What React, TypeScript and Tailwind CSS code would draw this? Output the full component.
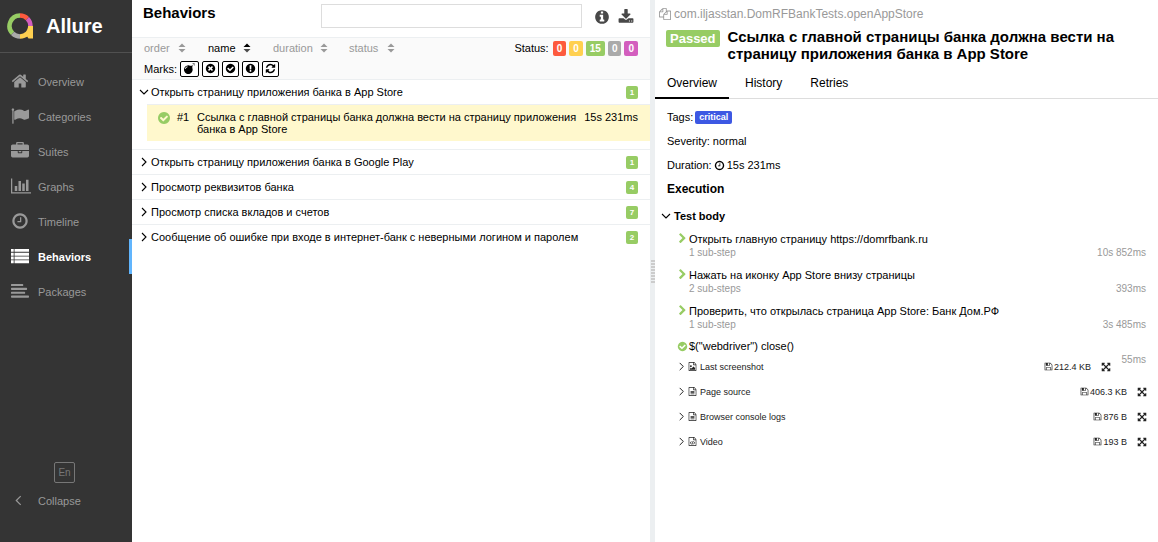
import React from 'react';

const DISC =
  'm0 0q0 209-103 385.5t-279.5 279.5-385.5 103-385.5-103-279.5-279.5-103-385.5 103-385.5 279.5-279.5 385.5-103 385.5 103 279.5 279.5 103 385.5z';
const FILE =
  'M1596 380q28 28 48 76t20 88v1152q0 40-28 68t-68 28h-1344q-40 0-68-28t-28-68v-1600q0-40 28-68t68-28h896q40 0 88 20t76 48zm-444-244v376h376q-10-29-22-41l-313-313q-12-12-41-22zm384 1528v-1024h-416q-40 0-68-28t-28-68v-416h-768v1536h1280z';

const ICONS = {
  home: 'M1472 992v480q0 26-19 45t-45 19h-384v-384h-256v384h-384q-26 0-45-19t-19-45v-480q0-1 .5-3t.5-3l575-474 575 474q1 2 1 6zm223-69l-62 74q-8 9-21 11h-3q-13 0-21-7l-692-577-692 577q-12 8-24 7-13-2-21-11l-62-74q-8-10-7-23.5t11-21.5l719-599q32-26 76-26t76 26l244 204v-195q0-14 9-23t23-9h192q14 0 23 9t9 23v408l219 182q10 8 11 21.5t-7 23.5z',
  flag: 'M320 256q0 72-64 110v1266q0 13-9.5 22.5t-22.5 9.5h-64q-13 0-22.5-9.5t-9.5-22.5v-1266q-64-38-64-110 0-53 37.5-90.5t90.5-37.5 90.5 37.5 37.5 90.5zm1472 64v763q0 25-12.5 38.5t-39.5 27.5q-215 116-369 116-61 0-123.5-22t-108.5-48-115.5-48-142.5-22q-192 0-464 146-17 9-33 9-26 0-45-19t-19-45v-742q0-32 31-55 21-14 79-43 236-120 421-120 107 0 200 29t219 88q38 19 88 19 54 0 117.5-21t110-47 88-47 54.5-21q26 0 45 19t19 45z',
  briefcase:
    'M640 256h512v-128h-512v128zm1152 640v480q0 66-47 113t-113 47h-1472q-66 0-113-47t-47-113v-480h672v160q0 26 19 45t45 19h320q26 0 45-19t19-45v-160h672zm-768 0v128h-256v-128h256zm768-480v384h-1792v-384q0-66 47-113t113-47h352v-160q0-40 28-68t68-28h576q40 0 68 28t28 68v160h352q66 0 113 47t47 113z',
  chart:
    'M640 896v512h-256v-512h256zm384-512v1024h-256v-1024h256zm1024 1152v128h-2048v-1536h128v1408h1920zm-640-896v768h-256v-768h256zm384-384v1152h-256v-1152h256z',
  clock:
    'M1024 544v448q0 14-9 23t-23 9h-320q-14 0-23-9t-9-23v-64q0-14 9-23t23-9h224v-352q0-14 9-23t23-9h64q14 0 23 9t9 23zm416 352q0-148-73-273t-198-198-273-73-273 73-198 198-73 273 73 273 198 198 273 73 273-73 198-198 73-273zM1664 896' + DISC,
  list: 'M0 192h270v290h-270zM350 192h1442v290h-1442zM0 570h270v290h-270zM350 570h1442v290h-1442zM0 948h270v290h-270zM350 948h1442v290h-1442zM0 1326h270v290h-270zM350 1326h1442v290h-1442z',
  align:
    'M64 192h1088q64 0 64 64v90q0 64-64 64h-1088q-64 0-64-64v-90q0-64 64-64zM64 576h1472q64 0 64 64v90q0 64-64 64h-1472q-64 0-64-64v-90q0-64 64-64zM64 960h1280q64 0 64 64v90q0 64-64 64h-1280q-64 0-64-64v-90q0-64 64-64zM64 1344h1664q64 0 64 64v90q0 64-64 64h-1664q-64 0-64-64v-90q0-64 64-64z',
  bomb: 'M571 589q-10-25-34-35t-49 0q-108 44-191 127t-127 191q-10 25 0 49t35 34q13 5 24 5 42 0 60-40 34-84 98.5-148.5t148.5-98.5q25-11 35-35t0-49zm942-356l46 46-244 243 68 68q19 19 19 45.5t-19 45.5l-64 64q89 161 89 343 0 143-55.5 273.5t-150 225-225 150-273.5 55.5-273.5-55.5-225-150-150-225-55.5-273.5 55.5-273.5 150-225 225-150 273.5-55.5q182 0 343 89l64-64q19-19 45.5-19t45.5 19l68 68zm8-56q-10 10-22 10-13 0-23-10l-91-90q-9-10-9-23t9-23q10-9 23-9t23 9l90 91q10 9 10 22.5t-10 22.5zm230 230q-11 9-23 9t-23-9l-90-91q-10-9-10-22.5t10-22.5q9-10 22.5-10t22.5 10l91 90q9 10 9 23t-9 23zm41-183q0 14-9 23t-23 9h-96q-14 0-23-9t-9-23 9-23 23-9h96q14 0 23 9t9 23zm-192-192v96q0 14-9 23t-23 9-23-9-9-23v-96q0-14 9-23t23-9 23 9 9 23zm151 55l-91 90q-10 10-22 10-13 0-23-10-10-9-10-22.5t10-22.5l90-91q10-9 23-9t23 9q9 10 9 23t-9 23z',
  times:
    'M1277 1122q0-26-19-45l-181-181 181-181q19-19 19-45 0-27-19-46l-90-90q-19-19-46-19-26 0-45 19l-181 181-181-181q-19-19-45-19-27 0-46 19l-90 90q-19 19-19 46 0 26 19 45l181 181-181 181q-19 19-19 45 0 27 19 46l90 90q19 19 46 19 26 0 45-19l181-181 181 181q19 19 45 19 27 0 46-19l90-90q19-19 19-46zM1664 896' + DISC,
  check:
    'M1412 734q0-28-18-46l-91-90q-19-19-45-19t-45 19l-408 407-226-226q-19-19-45-19t-45 19l-91 90q-18 18-18 46 0 27 18 45l362 362q19 19 45 19 27 0 46-19l543-543q18-18 18-45zM1664 896' + DISC,
  exclamation:
    'M896 128q209 0 385.5 103t279.5 279.5 103 385.5-103 385.5-279.5 279.5-385.5 103-385.5-103-279.5-279.5-103-385.5 103-385.5 279.5-279.5 385.5-103zm128 1247v-190q0-14-9-23.5t-22-9.5h-192q-13 0-23 10t-10 23v190q0 13 10 23t23 10h192q13 0 22-9.5t9-23.5zm-2-344l18-621q0-12-10-18-10-8-24-8h-220q-14 0-24 8-10 6-10 18l17 621q0 10 10 17.5t24 7.5h185q14 0 23.5-7.5t10.5-17.5z',
  refresh:
    'M1639 1056q0 5-1 7-64 268-268 434.5t-478 166.5q-146 0-282.5-55t-243.5-157l-129 129q-19 19-45 19t-45-19-19-45v-448q0-26 19-45t45-19h448q26 0 45 19t19 45-19 45l-137 137q71 66 161 102t187 36q134 0 250-65t186-179q11-17 53-117 8-23 30-23h192q13 0 22.5 9.5t9.5 22.5zm25-800v448q0 26-19 45t-45 19h-448q-26 0-45-19t-19-45 19-45l138-138q-148-137-349-137-134 0-250 65t-186 179q-11 17-53 117-8 23-30 23h-199q-13 0-22.5-9.5t-9.5-22.5v-7q65-268 270-434.5t480-166.5q146 0 284 55.5t245 156.5l130-129q19-19 45-19t45 19 19 45z',
  info: 'M1152 1376v-160q0-14-9-23t-23-9h-96v-512q0-14-9-23t-23-9h-320q-14 0-23 9t-9 23v160q0 14 9 23t23 9h96v320h-96q-14 0-23 9t-9 23v160q0 14 9 23t23 9h448q14 0 23-9t9-23zm-128-896v-160q0-14-9-23t-23-9h-192q-14 0-23 9t-9 23v160q0 14 9 23t23 9h192q14 0 23-9t9-23zM1664 896' + DISC,
  download:
    'M1344 1344q0-26-19-45t-45-19-45 19-19 45 19 45 45 19 45-19 19-45zm256 0q0-26-19-45t-45-19-45 19-19 45 19 45 45 19 45-19 19-45zm128-224v320q0 40-28 68t-68 28h-1472q-40 0-68-28t-28-68v-320q0-40 28-68t68-28h465l135 136q58 56 136 56t136-56l136-136h464q40 0 68 28t28 68zm-325-569q17 41-14 70l-448 448q-18 19-45 19t-45-19l-448-448q-31-29-14-70 17-39 59-39h256v-448q0-26 19-45t45-19h256q26 0 45 19t19 45v448h256q42 0 59 39z',
  files:
    'M1696 384q40 0 68 28t28 68v1216q0 40-28 68t-68 28h-960q-40 0-68-28t-28-68v-288h-544q-40 0-68-28t-28-68v-672q0-40 20-88t48-76l408-408q28-28 76-48t88-20h416q40 0 68 28t28 68v328q68-40 128-40h416zm-544 213l-299 299h299v-299zm-640-384l-299 299h299v-299zm196 647l316-316v-416h-384v416q0 40-28 68t-68 28h-416v640h512v-256q0-40 20-88t48-76zm956 804v-1152h-384v416q0 40-28 68t-68 28h-416v640h896z',
  chevron:
    'M1363 877l-742 742q-19 19-45 19t-45-19l-166-166q-19-19-19-45t19-45l531-531-531-531q-19-19-19-45t19-45l166-166q19-19 45-19t45 19l742 742q19 19 19 45t-19 45z',
  image:
    FILE + 'M1408 1216v320h-1024v-192l192-192 128 128 384-384zm-832-192q-80 0-136-56t-56-136 56-136 136-56 136 56 56 136-56 136-136 56z',
  text: FILE + 'M512 800h768v128h-768zM512 1056h768v128h-768zM512 1312h768v128h-768z',
  code: FILE + 'M650 850l90 75-180 235 180 235-90 75-250-310zM1142 850l-90 75 180 235-180 235 90 75 250-310zM950 800l110 25-220 700-110-25z',
  save: 'M512 1536h768v-384h-768v384zm896 0h128v-896q0-14-10-38.5t-20-34.5l-281-281q-10-10-34-20t-39-10v416q0 40-28 68t-68 28h-576q-40 0-68-28t-28-68v-416h-128v1280h128v-416q0-40 28-68t68-28h832q40 0 68 28t28 68v416zm-384-928v-320q0-13-9.5-22.5t-22.5-9.5h-192q-13 0-22.5 9.5t-9.5 22.5v320q0 13 9.5 22.5t22.5 9.5h192q13 0 22.5-9.5t9.5-22.5zm640 32v928q0 40-28 68t-68 28h-1344q-40 0-68-28t-28-68v-1344q0-40 28-68t68-28h928q40 0 88 20t76 48l280 280q28 28 48 76t20 88z',
  expand:
    'M1411 541l-355 355 355 355 144-144q29-31 70-14 39 17 39 59v448q0 26-19 45t-45 19h-448q-42 0-59-40-17-39 14-69l144-144-355-355-355 355 144 144q31 30 14 69-17 40-59 40h-448q-26 0-45-19t-19-45v-448q0-42 40-59 39-17 69 14l144 144 355-355-355-355-144 144q-19 19-45 19-12 0-24-5-40-17-40-59v-448q0-26 19-45t45-19h448q42 0 59 40 17 39-14 69l-144 144 355 355 355-355-144-144q-31-30-14-69 17-40 59-40h448q26 0 45 19t19 45v448q0 42-39 59-13 5-25 5-26 0-45-19z',
};

type IconName = keyof typeof ICONS;

function Icon({ name, className = 'size-3' }: { name: IconName; className?: string }) {
  return (
    <svg
      viewBox={name === 'chart' ? '0 0 2048 1792' : '0 0 1792 1792'}
      className={`shrink-0 ${className}`}
      fill="currentColor"
      fillRule="evenodd"
      aria-hidden="true"
    >
      <path d={ICONS[name]} />
    </svg>
  );
}

function Angle({ dir, className = '' }: { dir: 'right' | 'down' | 'left'; className?: string }) {
  const d = { right: 'M3 1l4 4-4 4', down: 'M1 3l4 4 4-4', left: 'M7 1L3 5l4 4' }[dir];
  return (
    <svg viewBox="0 0 10 10" className={`shrink-0 ${className}`} fill="none" stroke="currentColor" strokeWidth="1.1" aria-hidden="true">
      <path d={d} />
    </svg>
  );
}

function Logo() {
  return (
    <svg viewBox="0 0 26 26" className="size-[26px] shrink-0" fill="none" strokeWidth="4.500" aria-hidden="true">
      <path d="M13 2.500A10.500 10.500 0 0 0 5.600 20.400" stroke="#97cc64" />
      <path d="M13 2.500A10.500 10.500 0 0 1 20.400 5.600" stroke="#fd5a3e" />
      <path d="M20.400 5.600A10.500 10.500 0 0 1 23.500 13" stroke="#d35ebe" />
      <path d="M5.600 20.400A10.500 10.500 0 0 0 13 23.500" stroke="#aaa" />
      <path d="M23.500 13A10.500 10.500 0 0 1 13 23.500" stroke="#ffd050" />
      <path d="M21.200 13H26v12.500h-4.500l-2-3z" fill="#ffd050" />
    </svg>
  );
}

const NAV: { label: string; icon: IconName }[] = [
  { label: 'Overview', icon: 'home' },
  { label: 'Categories', icon: 'flag' },
  { label: 'Suites', icon: 'briefcase' },
  { label: 'Graphs', icon: 'chart' },
  { label: 'Timeline', icon: 'clock' },
  { label: 'Behaviors', icon: 'list' },
  { label: 'Packages', icon: 'align' },
];

function Sidebar() {
  return (
    <aside className="flex w-[132px] shrink-0 flex-col bg-[#343434] text-[#999]">
      <a href="#" className="flex h-[53px] items-center gap-[13px] border-b border-[#505050] pl-[7px] text-xl font-bold text-white">
        <Logo />
        <span>Allure</span>
      </a>
      <nav className="mt-[11px]">
        {NAV.map(({ label, icon }) => {
          const active = label === 'Behaviors';
          return (
            <a
              key={label}
              href={`#${label.toLowerCase()}`}
              className={`flex h-[35px] items-center border-r-[3px] pl-[11px] ${
                active ? 'border-[#61b5fd] font-bold text-white' : 'border-transparent'
              }`}
            >
              <span className="flex w-[27px] pb-0.5">
                <Icon name={icon} className={icon === 'chart' ? 'h-[18px] w-5' : 'size-[18px]'} />
              </span>
              {label}
            </a>
          );
        })}
      </nav>
      <div className="mt-auto mb-6 flex flex-col">
        <button type="button" className="ml-[54px] size-[21px] rounded-xs border border-[#777] text-[10px] text-[#777]">
          En
        </button>
        <button type="button" className="flex h-[35px] items-center pl-[13px]">
          <span className="flex w-[25px]">
            <Angle dir="left" className="size-[11px]" />
          </span>
          Collapse
        </button>
      </div>
    </aside>
  );
}

const SORTS = [
  { label: 'order', width: 'w-16 pr-[22px]' },
  { label: 'name', width: 'w-[65px] pr-[22px]' },
  { label: 'duration', width: 'w-[76px] pr-[21px]' },
  { label: 'status', width: 'w-[46px]' },
];

const STATUSES = [
  { count: 0, color: 'bg-[#fd5a3e]', name: 'Failed' },
  { count: 0, color: 'bg-[#ffd050]', name: 'Broken' },
  { count: 15, color: 'bg-[#97cc64]', name: 'Passed' },
  { count: 0, color: 'bg-[#aaa]', name: 'Skipped' },
  { count: 0, color: 'bg-[#d35ebe]', name: 'Unknown' },
];

const MARKS: { icon: IconName; name: string }[] = [
  { icon: 'bomb', name: 'Flaky' },
  { icon: 'times', name: 'New failed' },
  { icon: 'check', name: 'New passed' },
  { icon: 'exclamation', name: 'New broken' },
  { icon: 'refresh', name: 'Retries' },
];

function GroupRow({ title, count, open = false }: { title: string; count: number; open?: boolean }) {
  return (
    <button type="button" aria-expanded={open} className="flex h-6 w-full items-center pr-3 pl-[7px] text-left">
      <Angle dir={open ? 'down' : 'right'} className="mr-0.5 size-[10px]" />
      <span className="grow">{title}</span>
      <span className="h-[13px] w-3 rounded-xs bg-[#97cc64] text-center text-[8px] leading-[13px] font-bold text-white">{count}</span>
    </button>
  );
}

const GROUPS = [
  { title: 'Открыть страницу приложения банка в Google Play', count: 1 },
  { title: 'Просмотр реквизитов банка', count: 4 },
  { title: 'Просмотр списка вкладов и счетов', count: 7 },
  { title: 'Сообщение об ошибке при входе в интернет-банк с неверными логином и паролем', count: 2 },
];

function BehaviorsPane() {
  return (
    <section className="min-w-0 flex-[518]">
      <header className="flex h-[37px] items-start pr-4 pl-[11px]">
        <h1 className="w-[178px] pt-[3px] text-[15px] leading-5 font-bold">Behaviors</h1>
        <input aria-label="Search" className="mt-1 h-6 min-w-0 grow border border-[#ddd] px-2 outline-none" />
        <button type="button" aria-label="Info" className="mt-[9px] ml-3 text-[#484848]">
          <Icon name="info" className="size-4" />
        </button>
        <button type="button" aria-label="Download" className="mt-[9px] ml-2 text-[#484848]">
          <Icon name="download" className="size-4" />
        </button>
      </header>

      <div className="border-y border-[#eceff1] bg-[#fafafa]">
        <div className="flex h-5 items-center pr-3 pl-3">
          <div className="flex grow">
            {SORTS.map(({ label, width }) => {
              const active = label === 'name';
              return (
                <button
                  key={label}
                  type="button"
                  className={`flex items-center justify-between ${width} ${active ? 'text-black' : 'text-[#999]'}`}
                >
                  <span>{label}</span>
                  <svg viewBox="0 0 8 10" className="h-[10px] w-2 shrink-0" fill="currentColor" aria-hidden="true">
                    <path d="M4 0.500l3.500 3.500h-7z" />
                    <path d="M4 9.500L.5 6h7z" opacity={active ? 0.7 : 1} />
                  </svg>
                </button>
              );
            })}
          </div>
          <span className="mr-1">Status:</span>
          <div className="flex gap-[3px]">
            {STATUSES.map(({ count, color, name }) => (
              <button
                key={name}
                type="button"
                title={name}
                className={`h-[15px] rounded-xs px-1 text-[10px] leading-[15px] font-bold text-white ${color}`}
              >
                {count}
              </button>
            ))}
          </div>
        </div>
        <div className="flex h-[21px] items-center gap-[3px] pl-3">
          <span>Marks:</span>
          {MARKS.map(({ icon, name }) => (
            <button
              key={icon}
              type="button"
              title={name}
              className={`flex h-4 items-center rounded-xs border border-black bg-white ${icon === 'bomb' ? 'px-[3px]' : 'px-0.5'}`}
            >
              <Icon name={icon} className="size-[11px]" />
            </button>
          ))}
        </div>
      </div>

      <GroupRow title="Открыть страницу приложения банка в App Store" count={1} open />
      <a href="#case" className="mb-2 ml-[15px] flex items-start border-t border-[#eceff1] bg-[#fff8cd] pt-1.5 pr-3 pb-1.5 pl-[10px] leading-3">
        <Icon name="check" className="mr-1.5 size-[14px] text-[#97cc64]" />
        <span className="w-5">#1</span>
        <span className="w-0 grow pr-1">Ссылка с главной страницы банка должна вести на страницу приложения банка в App Store</span>
        <span>15s 231ms</span>
      </a>
      {GROUPS.map((group) => (
        <div key={group.title} className="border-t border-[#eceff1]">
          <GroupRow {...group} />
        </div>
      ))}
    </section>
  );
}

const STEPS = [
  { title: 'Открыть главную страницу https://domrfbank.ru', sub: '1 sub-step', time: '10s 852ms' },
  { title: 'Нажать на иконку App Store внизу страницы', sub: '2 sub-steps', time: '393ms' },
  { title: 'Проверить, что открылась страница App Store: Банк Дом.РФ', sub: '1 sub-step', time: '3s 485ms' },
];

const FILES: { name: string; icon: IconName; size: string; inset: string }[] = [
  { name: 'Last screenshot', icon: 'image', size: '212.4 KB', inset: 'pr-[47px]' },
  { name: 'Page source', icon: 'text', size: '406.3 KB', inset: 'pr-[11px]' },
  { name: 'Browser console logs', icon: 'text', size: '876 B', inset: 'pr-[11px]' },
  { name: 'Video', icon: 'code', size: '193 B', inset: 'pr-[11px]' },
];

function TestCasePane() {
  return (
    <section className="min-w-0 flex-[503]">
      <div className="flex h-7 items-center gap-[3px] pl-1 text-xs text-[#999]">
        <Icon name="files" />
        <span>com.iljasstan.DomRFBankTests.openAppStore</span>
      </div>
      <div className="flex items-start gap-2 pr-3 pl-[11px]">
        <span className="mt-0.5 rounded-xs bg-[#97cc64] px-1 text-[13px] leading-[17px] font-bold text-white">Passed</span>
        <h2 className="text-[15px] leading-[17px] font-bold">
          Ссылка с главной страницы банка должна вести на страницу приложения банка в App Store
        </h2>
      </div>
      <nav className="mt-1.5 flex h-[31px] border-b border-[#ddd] text-xs">
        <a href="#overview" className="-mb-px flex items-center border-b-2 border-black px-3">
          Overview
        </a>
        <a href="#history" className="flex items-center px-4">
          History
        </a>
        <a href="#retries" className="flex items-center px-3">
          Retries
        </a>
      </nav>

      <div className="flex flex-col pt-1.5 pl-3">
        <div className="flex h-6 items-center gap-0.5">
          Tags:
          <span className="rounded-xs bg-[#3d58e3] px-1 text-[9px] leading-[13px] font-bold text-white">critical</span>
        </div>
        <div className="flex h-6 items-center">Severity: normal</div>
        <div className="flex h-6 items-center gap-0.5">
          Duration: <Icon name="clock" className="size-[11px]" /> 15s 231ms
        </div>
        <h3 className="flex h-6 items-center text-xs font-bold">Execution</h3>
      </div>

      <button type="button" aria-expanded="true" className="mt-[3px] flex h-6 items-center gap-[3px] pl-1.5 font-bold">
        <Angle dir="down" className="size-[10px]" />
        Test body
      </button>

      <ul className="pr-3 pl-[22px]">
        {STEPS.map((step) => (
          <li key={step.title} className="flex h-9 items-start pt-[5px] leading-[13px]">
            <Icon name="chevron" className="mr-px size-[11px] text-[#97cc64]" />
            <div className="grow">
              <div>{step.title}</div>
              <div className="flex justify-between text-[10px] text-[#999]">
                <span>{step.sub}</span>
                <span>{step.time}</span>
              </div>
            </div>
          </li>
        ))}
        <li className="flex h-[18px] items-start pt-1 leading-[13px]">
          <Icon name="check" className="mt-px mr-px size-[11px] text-[#97cc64]" />
          <span className="grow">$("webdriver") close()</span>
          <span className="pt-[13px] text-[10px] text-[#999]">55ms</span>
        </li>
      </ul>

      <ul className="text-[9px]">
        {FILES.map(({ name, icon, size, inset }) => (
          <li key={name} className={`flex h-[25px] items-center pl-[22px] text-[#222] ${inset}`}>
            <Angle dir="right" className="mr-0.5 size-[9px]" />
            <Icon name={icon} className="mr-[3px] size-[9px]" />
            <span className="grow">{name}</span>
            <a href="#save" className="flex items-center gap-px">
              <Icon name="save" className="size-[9px]" />
              {size}
            </a>
            <button type="button" aria-label={`Expand ${name}`} className="ml-[10px]">
              <Icon name="expand" className="size-[10px]" />
            </button>
          </li>
        ))}
      </ul>
    </section>
  );
}

export default function App() {
  return (
    <div className="flex min-h-screen bg-white font-['Liberation_Sans',Arial,sans-serif] text-[11px] leading-4 text-black">
      <Sidebar />
      <BehaviorsPane />
      <div className="flex w-[5px] shrink-0 flex-col items-center justify-center gap-px bg-[#eceff1]" role="separator">
        {Array.from({ length: 8 }, (_, i) => (
          <span key={i} className="h-0.5 w-1 bg-[#ccc]" />
        ))}
      </div>
      <TestCasePane />
    </div>
  );
}
